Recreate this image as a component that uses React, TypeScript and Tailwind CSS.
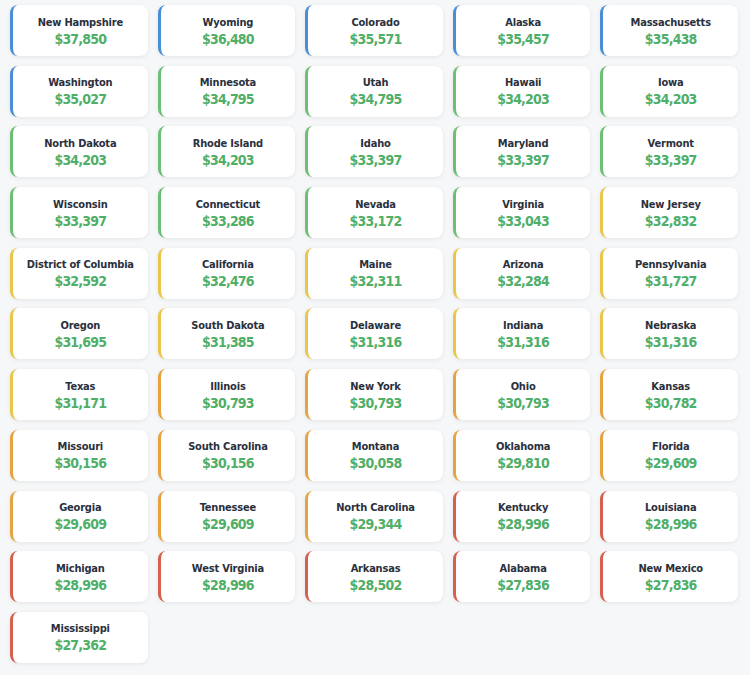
import React from 'react'

type Tier = 'blue' | 'green' | 'yellow' | 'orange' | 'red'

interface StateRow {
  name: string
  value: number
  tier: Tier
}

const states: StateRow[] = [
  { name: 'New Hampshire', value: 37850, tier: 'blue' },
  { name: 'Wyoming', value: 36480, tier: 'blue' },
  { name: 'Colorado', value: 35571, tier: 'blue' },
  { name: 'Alaska', value: 35457, tier: 'blue' },
  { name: 'Massachusetts', value: 35438, tier: 'blue' },
  { name: 'Washington', value: 35027, tier: 'blue' },
  { name: 'Minnesota', value: 34795, tier: 'green' },
  { name: 'Utah', value: 34795, tier: 'green' },
  { name: 'Hawaii', value: 34203, tier: 'green' },
  { name: 'Iowa', value: 34203, tier: 'green' },
  { name: 'North Dakota', value: 34203, tier: 'green' },
  { name: 'Rhode Island', value: 34203, tier: 'green' },
  { name: 'Idaho', value: 33397, tier: 'green' },
  { name: 'Maryland', value: 33397, tier: 'green' },
  { name: 'Vermont', value: 33397, tier: 'green' },
  { name: 'Wisconsin', value: 33397, tier: 'green' },
  { name: 'Connecticut', value: 33286, tier: 'green' },
  { name: 'Nevada', value: 33172, tier: 'green' },
  { name: 'Virginia', value: 33043, tier: 'green' },
  { name: 'New Jersey', value: 32832, tier: 'yellow' },
  { name: 'District of Columbia', value: 32592, tier: 'yellow' },
  { name: 'California', value: 32476, tier: 'yellow' },
  { name: 'Maine', value: 32311, tier: 'yellow' },
  { name: 'Arizona', value: 32284, tier: 'yellow' },
  { name: 'Pennsylvania', value: 31727, tier: 'yellow' },
  { name: 'Oregon', value: 31695, tier: 'yellow' },
  { name: 'South Dakota', value: 31385, tier: 'yellow' },
  { name: 'Delaware', value: 31316, tier: 'yellow' },
  { name: 'Indiana', value: 31316, tier: 'yellow' },
  { name: 'Nebraska', value: 31316, tier: 'yellow' },
  { name: 'Texas', value: 31171, tier: 'yellow' },
  { name: 'Illinois', value: 30793, tier: 'orange' },
  { name: 'New York', value: 30793, tier: 'orange' },
  { name: 'Ohio', value: 30793, tier: 'orange' },
  { name: 'Kansas', value: 30782, tier: 'orange' },
  { name: 'Missouri', value: 30156, tier: 'orange' },
  { name: 'South Carolina', value: 30156, tier: 'orange' },
  { name: 'Montana', value: 30058, tier: 'orange' },
  { name: 'Oklahoma', value: 29810, tier: 'orange' },
  { name: 'Florida', value: 29609, tier: 'orange' },
  { name: 'Georgia', value: 29609, tier: 'orange' },
  { name: 'Tennessee', value: 29609, tier: 'orange' },
  { name: 'North Carolina', value: 29344, tier: 'orange' },
  { name: 'Kentucky', value: 28996, tier: 'red' },
  { name: 'Louisiana', value: 28996, tier: 'red' },
  { name: 'Michigan', value: 28996, tier: 'red' },
  { name: 'West Virginia', value: 28996, tier: 'red' },
  { name: 'Arkansas', value: 28502, tier: 'red' },
  { name: 'Alabama', value: 27836, tier: 'red' },
  { name: 'New Mexico', value: 27836, tier: 'red' },
  { name: 'Mississippi', value: 27362, tier: 'red' },
]

const tierBorder: Record<Tier, string> = {
  blue: 'border-l-[#4a8fd6]',
  green: 'border-l-[#6cbf73]',
  yellow: 'border-l-[#e9c54a]',
  orange: 'border-l-[#e5a342]',
  red: 'border-l-[#d5604d]',
}

const App: React.FC = () => {
  return (
    <div className="min-h-[675px] bg-[#f6f7f9] pl-[10px] pr-[12px] pt-[5px] pb-4 font-['DejaVu_Sans',sans-serif]">
      <div className="grid grid-cols-5 gap-x-[10px] gap-y-[9.7px]">
        {states.map(s => (
          <div
            key={s.name}
            className={`h-[51px] rounded-lg bg-white border-l-[3px] shadow-[0_1px_4px_rgba(0,0,0,0.08)] flex flex-col items-center justify-center ${tierBorder[s.tier]}`}
          >
            <div className="mt-[1px] text-[11px] font-bold leading-[15px] tracking-[-0.2px] text-[#2a303d] font-stretch-condensed whitespace-nowrap">
              {s.name}
            </div>
            <div className="text-[14px] font-bold leading-[18px] tracking-[-0.8px] text-[#4fae68] font-stretch-condensed">
              ${s.value.toLocaleString('en-US')}
            </div>
          </div>
        ))}
      </div>
    </div>
  )
}

export default App
